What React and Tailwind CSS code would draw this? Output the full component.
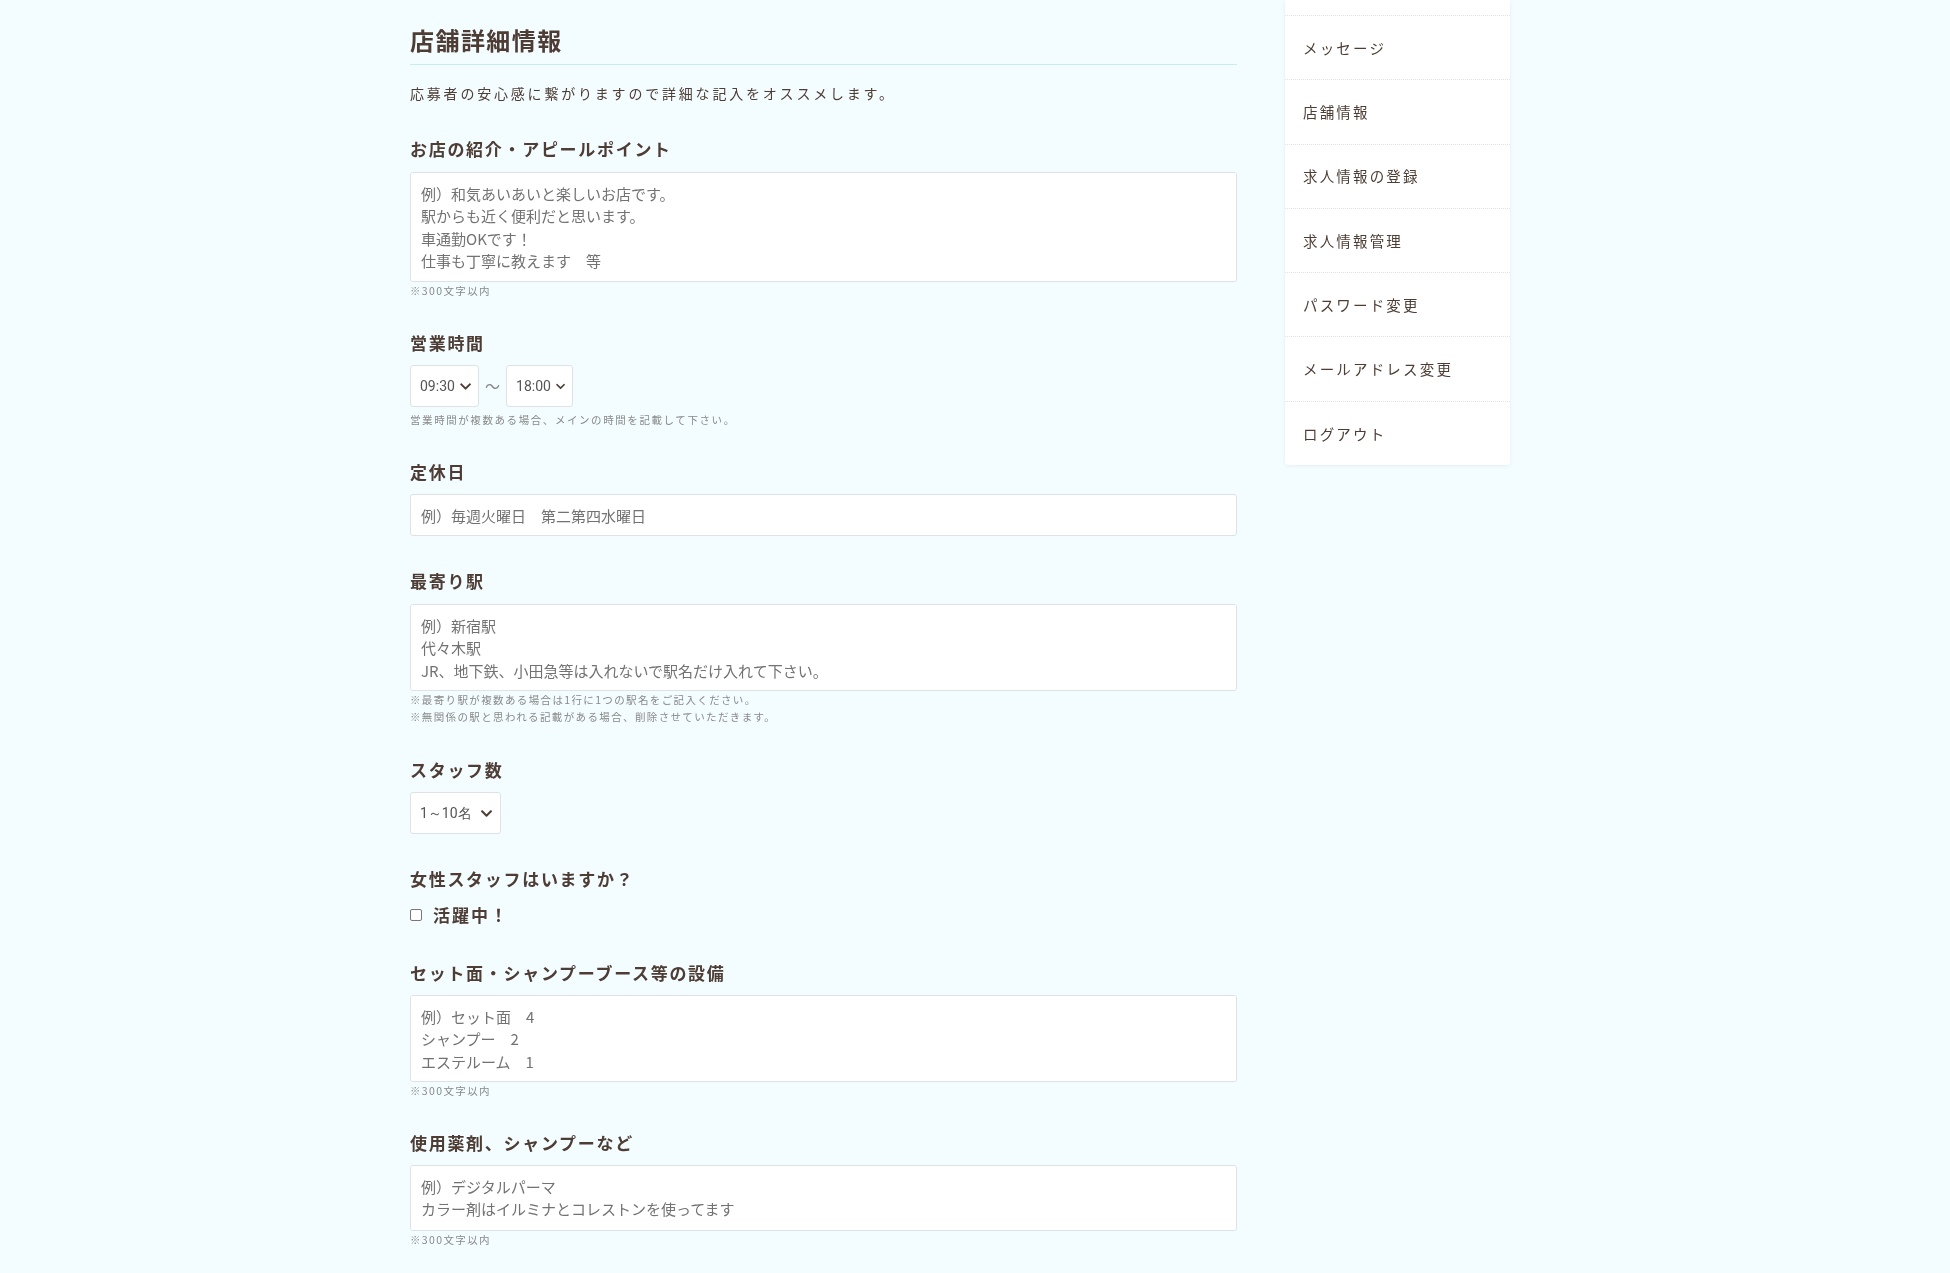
import { FaChevronDown } from "react-icons/fa";

const font = { fontFamily: '"Noto Sans CJK JP", "Noto Sans", sans-serif' };

const menu = [
  "メッセージ",
  "店舗情報",
  "求人情報の登録",
  "求人情報管理",
  "パスワード変更",
  "メールアドレス変更",
  "ログアウト",
];

const Label = ({ children, mb = "mb-[11px]" }) => (
  <h3 className={`text-[17px] leading-[24px] font-bold tracking-[0.1em] text-[#4d3d35] ${mb}`}>
    {children}
  </h3>
);

const Note = ({ children }) => (
  <p className="text-[10.5px] leading-[17px] tracking-[0.13em] text-[#8a8a8a]">
    {children}
  </p>
);

const Area = ({ text, h }) => (
  <textarea
    placeholder={text}
    style={{ height: h }}
    className="block w-full resize-none bg-white border border-[#dde2e6] rounded-[3px] px-[10px] py-[10px] text-[15px] leading-[22.4px] text-[#333] placeholder:text-[#727272] outline-none"
  />
);

const Select = ({ value, w }) => (
  <div
    style={{ width: w }}
    className="h-[42px] bg-white border border-[#dde2e6] rounded-[3px] flex items-center pl-[9px] gap-[5px] text-[14px] text-[#555]"
  >
    <span style={{ fontFamily: "Roboto, sans-serif" }}>{value}</span>
    <FaChevronDown className="text-[13px] text-[#4d3d35] ml-auto mr-[7px]" />
  </div>
);

export default function App() {
  return (
    <div style={font} className="min-h-[1273px] bg-[#f3fcfe] text-[#4d3d35]">
      <div className="flex items-start pl-[410px]">
        <main className="w-[827px] pt-[24px]">
          <h2 className="text-[24px] leading-[32px] font-bold tracking-[0.06em] pb-[8px] border-b border-[#c6eef0]">
            店舗詳細情報
          </h2>
          <p className="mt-[18px] text-[14px] leading-[20px] tracking-[0.2em] text-[#4d3d35]">
            応募者の安心感に繋がりますので詳細な記入をオススメします。
          </p>

          <section className="mt-[34px]">
            <Label>お店の紹介・アピールポイント</Label>
            <Area
              h="110px"
              text={"例）和気あいあいと楽しいお店です。\n駅からも近く便利だと思います。\n車通勤OKです！\n仕事も丁寧に教えます　等"}
            />
            <Note>※300文字以内</Note>
          </section>

          <section className="mt-[32px]">
            <Label mb="mb-[10px]">営業時間</Label>
            <div className="flex items-center">
              <Select value="09:30" w="69px" />
              <span className="mx-[6px] text-[15px] text-[#888]">～</span>
              <Select value="18:00" w="67px" />
            </div>
            <p className="mt-[4px] text-[10.5px] leading-[17px] tracking-[0.15em] text-[#8a8a8a]">
              営業時間が複数ある場合、メインの時間を記載して下さい。
            </p>
          </section>

          <section className="mt-[32px]">
            <Label mb="mb-[10px]">定休日</Label>
            <input
              placeholder="例）毎週火曜日　第二第四水曜日"
              className="block w-full h-[42px] bg-white border border-[#dde2e6] rounded-[3px] px-[10px] text-[15px] text-[#333] placeholder:text-[#727272] outline-none"
            />
          </section>

          <section className="mt-[33px]">
            <Label>最寄り駅</Label>
            <Area
              h="87px"
              text={"例）新宿駅\n代々木駅\nJR、地下鉄、小田急等は入れないで駅名だけ入れて下さい。"}
            />
            <Note>※最寄り駅が複数ある場合は1行に1つの駅名をご記入ください。</Note>
            <Note>※無関係の駅と思われる記載がある場合、削除させていただきます。</Note>
          </section>

          <section className="mt-[33px]">
            <Label mb="mb-[10px]">スタッフ数</Label>
            <Select value="1～10名" w="91px" />
          </section>

          <section className="mt-[33px]">
            <Label mb="mb-[12px]">女性スタッフはいますか？</Label>
            <label className="flex items-center gap-[11px] text-[17px] leading-[24px] font-bold tracking-[0.12em]">
              <span className="w-[12px] h-[12px] border border-[#777] rounded-[2px] bg-white"></span>
              活躍中！
            </label>
          </section>

          <section className="mt-[34px]">
            <Label mb="mb-[10px]">セット面・シャンプーブース等の設備</Label>
            <Area h="87px" text={"例）セット面　4\nシャンプー　2\nエステルーム　1"} />
            <Note>※300文字以内</Note>
          </section>

          <section className="mt-[32px]">
            <Label mb="mb-[10px]">使用薬剤、シャンプーなど</Label>
            <Area h="66px" text={"例）デジタルパーマ\nカラー剤はイルミナとコレストンを使ってます"} />
            <Note>※300文字以内</Note>
          </section>
        </main>

        <aside className="ml-[48px] w-[225px] bg-white rounded-b-[4px] shadow-[0_1px_4px_rgba(0,0,0,0.06)]">
          <div className="h-[15px]"></div>
          {menu.map((m) => (
            <div
              key={m}
              className="h-[64.3px] flex items-center pl-[18px] border-t border-dotted border-[#e2e2e2] text-[14.5px] tracking-[0.15em] text-[#4d3d35]"
            >
              {m}
            </div>
          ))}
        </aside>
      </div>
    </div>
  );
}
